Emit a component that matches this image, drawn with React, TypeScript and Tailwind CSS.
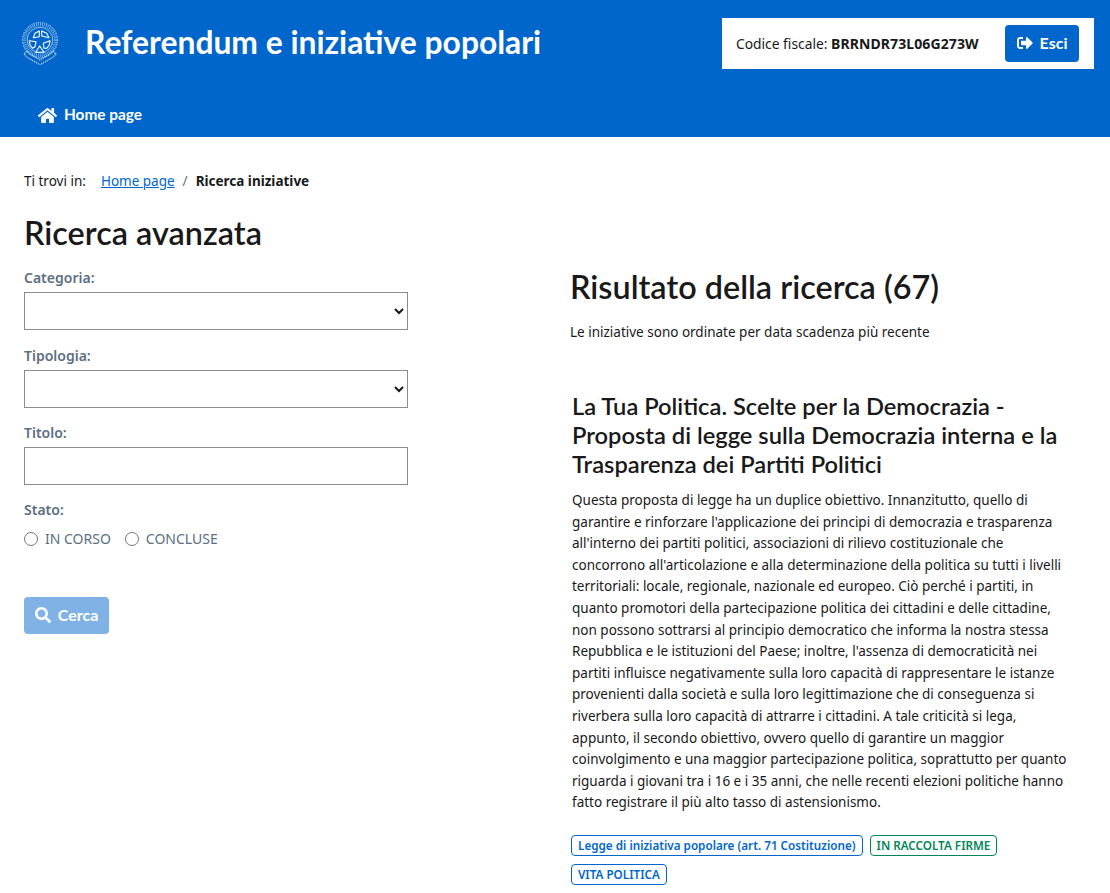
import { FaHome, FaSearch, FaSignOutAlt } from "react-icons/fa";

const BODY = "font-['Noto_Sans',sans-serif]";
const HEAD = "font-['Lato',sans-serif]";

const Emblem = () => (
  <svg viewBox="0 0 38 44" className="w-[38px] h-[44px]" fill="none" stroke="#fff">
    {/* wreath */}
    <circle cx="19" cy="19" r="15.8" strokeWidth="4" strokeDasharray="0.9 1.1" stroke="#cfe0f5" opacity="0.6" />
    <circle cx="19" cy="19" r="17.6" strokeWidth="0.6" strokeDasharray="2 1.4" stroke="#e6f0fb" opacity="0.7" />
    <circle cx="19" cy="19" r="12.8" strokeWidth="0.7" stroke="#e6f0fb" opacity="0.9" />
    {/* star sections */}
    <g strokeWidth="1.1" strokeLinejoin="round">
      <path d="M18.3 10L14 12.3 12.3 16.7 18.3 15.7z" />
      <path d="M20.7 10L25.7 12.3 28 16.7 20.7 15z" />
      <path d="M8.3 19.7L15 20.7 14 25.7 11.7 27.3 9 24z" />
      <path d="M29 19.7L22.3 22.3 23 27.3 25.7 27.3 28.3 24z" />
      <path d="M18.7 25L23 31.3 14.7 31.3z" />
    </g>
    {/* ribbon */}
    <path d="M3 33C8 39 14 40 19 44C24 40 30 39 35 33L32 30C27 35 23 36 19 39C15 36 11 35 6 30z" strokeWidth="1.2" strokeDasharray="1.3 0.8" stroke="#dbe8f8" opacity="0.85" />
  </svg>
);

const Field = ({ label, children }: { label: string; children: React.ReactNode }) => (
  <div className="mb-[14.5px]">
    <label className="block text-[14px] font-semibold leading-[21.6px] text-[#5c6f82] mb-[3.5px]">{label}</label>
    {children}
  </div>
);

const Badge = ({ text, green }: { text: string; green?: boolean }) => (
  <span
    className={
      "inline-block h-[21px] px-[6px] rounded-[4px] border text-[11.7px] font-semibold leading-[19px] " +
      (green ? "border-[#008758] text-[#008758]" : "border-[#0066cc] text-[#0066cc]")
    }
  >
    {text}
  </span>
);

export default function App() {
  return (
    <div className={BODY + " text-[#19191a] bg-white h-[893px] overflow-hidden"}>
      <header className="bg-[#0066cc] h-[137px] text-white">
        <div className="flex items-start pl-[21px] pr-[16px] pt-[18px]">
          <div className="mt-[3px]">
            <Emblem />
          </div>
          <h1 className={HEAD + " ml-[26px] text-[31.8px] leading-[48px] font-bold"}>
            Referendum e iniziative popolari
          </h1>
          <div className="ml-auto w-[372px] h-[51px] bg-white flex items-center pl-[14px] pr-[15px] text-[#19191a] text-[14px]">
            <span className="text-[13.8px]">
              Codice fiscale: <b className="text-[14px] tracking-[0.1px]">BRRNDR73L06G273W</b>
            </span>
            <button className={HEAD + " ml-auto pb-[1px] h-[37px] w-[74px] rounded-[4px] bg-[#0066cc] text-white font-bold text-[16px] flex items-center justify-center gap-[7px]"}>
              <FaSignOutAlt className="w-[16px] h-[16px]" />
              Esci
            </button>
          </div>
        </div>
        <nav className={HEAD + " flex items-center pl-[38px] mt-[34px] h-[24px] text-[15.4px] font-bold"}>
          <FaHome className="w-[19px] h-[17px] mr-[7px]" />
          Home page
        </nav>
      </header>

      <main className="px-[24px]">
        <div className="pt-[33px] h-[70px] flex items-start text-[13.5px] leading-[22px]">
          <span>Ti trovi in:</span>
          <a className="ml-[15px] text-[#0066cc] underline">Home page</a>
          <span className="mx-[8px] text-[#5c6f82]">/</span>
          <b>Ricerca iniziative</b>
        </div>

        <div className="flex items-start">
          <form className="w-[384px] shrink-0">
            <h2 className={HEAD + " text-[32.4px] leading-[44px] font-semibold mt-[4px] mb-[12px]"}>Ricerca avanzata</h2>
            <Field label="Categoria:">
              <select className="block w-full h-[38px] border border-[#8c8c8c] bg-white text-[14px]" />
            </Field>
            <Field label="Tipologia:">
              <select className="block w-full h-[38px] border border-[#8c8c8c] bg-white text-[14px]" />
            </Field>
            <Field label="Titolo:">
              <input className="block w-full h-[38px] border border-[#8c8c8c]" />
            </Field>
            <label className="-mt-[1px] block text-[14px] font-semibold leading-[21.6px] text-[#5c6f82]">Stato:</label>
            <div className="flex items-center mt-[8px] text-[14px] text-[#5c6f82] leading-[21px]">
              <span className="w-[14px] h-[14px] rounded-full border border-[#767676]" />
              <span className="ml-[7px]">IN CORSO</span>
              <span className="ml-[14px] w-[14px] h-[14px] rounded-full border border-[#767676]" />
              <span className="ml-[7px]">CONCLUSE</span>
            </div>
            <button type="button" className={HEAD + " mt-[48px] pb-[1px] w-[85px] h-[37px] rounded-[4px] bg-[#80b2e5] text-white font-bold text-[16px] flex items-center justify-center gap-[7px]"}>
              <FaSearch className="w-[16px] h-[16px]" />
              Cerca
            </button>
          </form>

          <section className="ml-[162px] flex-1 min-w-0">
            <h2 className={HEAD + " text-[32.4px] leading-[44px] font-semibold mt-[58px]"}>Risultato della ricerca (67)</h2>
            <p className="mt-[13px] text-[13.5px] leading-[20px]">Le iniziative sono ordinate per data scadenza più recente</p>
            <article className="ml-[2px] mt-[50px]">
              <h3 className={HEAD + " text-[23.7px] leading-[29px] font-semibold whitespace-nowrap"}>
                La Tua Politica. Scelte per la Democrazia -<br />
                Proposta di legge sulla Democrazia interna e la<br />
                Trasparenza dei Partiti Politici
              </h3>
              <p className="mt-[11px] text-[13.5px] leading-[21.6px] whitespace-nowrap">
                Questa proposta di legge ha un duplice obiettivo. Innanzitutto, quello di<br />
                garantire e rinforzare l'applicazione dei principi di democrazia e trasparenza<br />
                all'interno dei partiti politici, associazioni di rilievo costituzionale che<br />
                concorrono all'articolazione e alla determinazione della politica su tutti i livelli<br />
                territoriali: locale, regionale, nazionale ed europeo. Ciò perché i partiti, in<br />
                quanto promotori della partecipazione politica dei cittadini e delle cittadine,<br />
                non possono sottrarsi al principio democratico che informa la nostra stessa<br />
                Repubblica e le istituzioni del Paese; inoltre, l'assenza di democraticità nei<br />
                partiti influisce negativamente sulla loro capacità di rappresentare le istanze<br />
                provenienti dalla società e sulla loro legittimazione che di conseguenza si<br />
                riverbera sulla loro capacità di attrarre i cittadini. A tale criticità si lega,<br />
                appunto, il secondo obiettivo, ovvero quello di garantire un maggior<br />
                coinvolgimento e una maggior partecipazione politica, soprattutto per quanto<br />
                riguarda i giovani tra i 16 e i 35 anni, che nelle recenti elezioni politiche hanno<br />
                fatto registrare il più alto tasso di astensionismo.
              </p>
              <div className="-ml-[1px] mt-[21px] flex flex-wrap gap-x-[7px] gap-y-[8px] w-[480px]">
                <Badge text="Legge di iniziativa popolare (art. 71 Costituzione)" />
                <Badge text="IN RACCOLTA FIRME" green />
                <Badge text="VITA POLITICA" />
              </div>
            </article>
          </section>
        </div>
      </main>
    </div>
  );
}
